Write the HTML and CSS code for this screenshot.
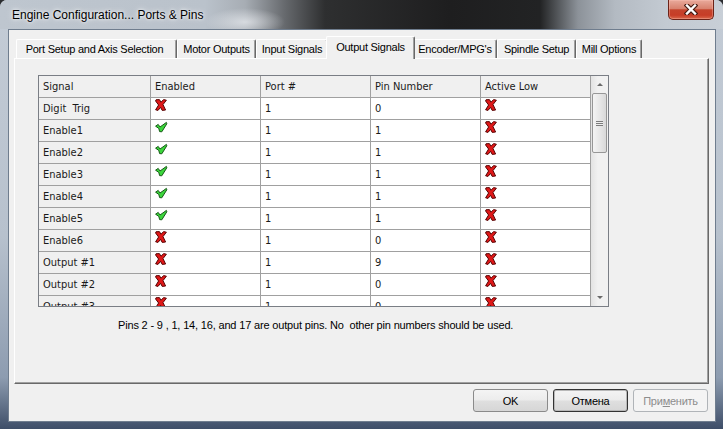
FILE: index.html
```html
<!DOCTYPE html>
<html lang="en">

<head>
  <meta charset="UTF-8" />
  <title>Engine Configuration... Ports &amp; Pins</title>
  <link rel="stylesheet" href="styles.css">
</head>

<body>
  <div class="window">
    <div class="titlebar">
      <span class="title">Engine Configuration... Ports &amp; Pins</span>
      <div class="close">
        <svg width="14" height="11" viewBox="0 0 14 11">
          <path d="M3 1.5 L11 9.5 M11 1.5 L3 9.5" stroke="#4a1d14" stroke-width="4.6" stroke-linecap="square" fill="none" />
          <path d="M3 1.5 L11 9.5 M11 1.5 L3 9.5" stroke="#fff" stroke-width="2.4" stroke-linecap="square" fill="none" />
        </svg>
      </div>
    </div>

    <div class="frame">
      <div class="client">
        <div class="tabs">
          <div class="tab tab-port">Port Setup and Axis Selection</div>
          <div class="tab tab-motor">Motor Outputs</div>
          <div class="tab tab-input">Input Signals</div>
          <div class="tab tab-output active">Output Signals</div>
          <div class="tab tab-encoder">Encoder/MPG's</div>
          <div class="tab tab-spindle">Spindle Setup</div>
          <div class="tab tab-mill">Mill Options</div>
        </div>

        <div class="panel">
          <div class="grid">
            <div class="grid-body">
              <table>
                <thead>
                  <tr>
                    <th class="col-signal">Signal</th>
                    <th class="col">Enabled</th>
                    <th class="col">Port #</th>
                    <th class="col">Pin Number</th>
                    <th class="col">Active Low</th>
                  </tr>
                </thead>
                <tbody id="rows"></tbody>
              </table>
            </div>
            <div class="scrollbar">
              <div class="sb-btn"><span class="arrow-up"></span></div>
              <div class="sb-thumb"><span class="grip"></span></div>
              <div class="sb-track"></div>
              <div class="sb-btn"><span class="arrow-down"></span></div>
            </div>
          </div>
          <p class="note">Pins 2 - 9 , 1, 14, 16, and 17 are output pins. No  other pin numbers should be used.</p>
        </div>

        <div class="buttons">
          <button class="btn">OK</button>
          <button class="btn btn-default">Отмена</button>
          <button class="btn" disabled>При<u>м</u>енить</button>
        </div>
      </div>
    </div>
  </div>

  <script>
    const signals = [
      ["Digit  Trig", false, 1, 0, false],
      ["Enable1", true, 1, 1, false],
      ["Enable2", true, 1, 1, false],
      ["Enable3", true, 1, 1, false],
      ["Enable4", true, 1, 1, false],
      ["Enable5", true, 1, 1, false],
      ["Enable6", false, 1, 0, false],
      ["Output #1", false, 1, 9, false],
      ["Output #2", false, 1, 0, false],
      ["Output #3", false, 1, 0, false]
    ];

    const cross = `<svg class="icon" width="12" height="12" viewBox="0 0 12 12">
      <polygon points="1,0.8 4.4,0.6 6,3.2 8.6,0.6 11.4,1.2 8,5.6 10.6,11 7.2,11.4 5.6,8.4 3,11.4 0.6,10.8 3.6,6 0.6,2"
        fill="#e01818" stroke="#560404" stroke-width="1" stroke-linejoin="round" /></svg>`;
    const check = `<svg class="icon" width="13" height="12" viewBox="0 0 13 12">
      <polygon points="0.6,5.2 3.2,3.4 5,6 11.4,1.4 11.8,2.8 6.8,10.8 4.6,10.6 3.8,7.4"
        fill="#3cd63c" stroke="#155815" stroke-width="1" stroke-linejoin="round" /></svg>`;

    const body = document.getElementById("rows");
    signals.forEach(([name, enabled, port, pin, low]) => {
      const tr = document.createElement("tr");
      tr.innerHTML = `
        <td class="row-head">${name}</td>
        <td class="cell-icon">${enabled ? check : cross}</td>
        <td>${port}</td>
        <td>${pin}</td>
        <td class="cell-icon">${low ? check : cross}</td>
      `;
      body.appendChild(tr);
    });
  </script>
</body>

</html>
```

FILE: styles.css
```css
html,
body {
  margin: 0;
  padding: 0;
  background: #2b2d30;
}

.window {
  width: 723px;
  height: 429px;
  overflow: hidden;
  border-radius: 7px 7px 0 0;
  background: linear-gradient(to bottom, #c4ccd6 0, #b7c1cd 55%, #8d9cb0 88%, #3e4e68 100%);
}

.titlebar {
  height: 29px;
  display: flex;
  justify-content: space-between;
  align-items: flex-start;
  background:
    radial-gradient(ellipse 40px 14px at 245px 22px, rgba(235, 238, 242, 0.7), rgba(235, 238, 242, 0)),
    linear-gradient(to right, #bec6cf 0, #bac2cb 205px, #a7adb4 245px, #66696d 285px, #2e2f30 325px, #1e1e1f 450px, #222324 540px, #8c9299 578px, #b3bac2 615px, #c3cad2 665px, #c8cfd7 723px);
}

.title {
  margin: 8px 0 0 12px;
  font-family: "Liberation Sans", Arial, sans-serif;
  font-size: 12px;
  color: #000;
  text-shadow: 0 0 6px rgba(255, 255, 255, 0.9), 0 0 3px rgba(255, 255, 255, 0.9);
}

.close {
  width: 44px;
  height: 19px;
  margin-right: 9px;
  display: flex;
  align-items: center;
  justify-content: center;
  border: 1px solid #6b2318;
  border-top: none;
  border-radius: 0 0 5px 5px;
  background: linear-gradient(to bottom, #e9aa9c 0%, #d8826f 45%, #c4432c 52%, #c73d27 80%, #d9684b 100%);
  box-shadow: inset 0 0 0 1px rgba(255, 200, 190, 0.35);
}

.frame {
  padding: 0 7px 7px 8px;
}

.client {
  box-sizing: border-box;
  height: 393px;
  border: 1px solid #6f7d8e;
  background: #f0f0f0;
  font-family: "Liberation Sans", Arial, sans-serif;
  font-size: 11px;
  letter-spacing: -0.25px;
  color: #000;
}

/* tab strip */

.tabs {
  display: flex;
  align-items: flex-end;
  height: 22px;
  margin: 6px 0 0 7px;
}

.tab {
  box-sizing: border-box;
  height: 19px;
  line-height: 18px;
  padding: 0;
  border-top: 1px solid #fff;
  border-left: 1px solid #fff;
  border-right: 1px solid #696969;
  border-radius: 2px 2px 0 0;
  box-shadow: inset -1px 0 0 #a0a0a0;
  text-align: center;
  white-space: nowrap;
}

.tab-port {
  width: 161px;
  padding-right: 4px;
}

.tab-motor {
  width: 79px;
}

.tab-input {
  width: 72px;
}

.tab-output {
  width: 85px;
}

.tab-encoder {
  width: 84px;
}

.tab-spindle {
  width: 79px;
}

.tab-mill {
  width: 66px;
}

.tab.active {
  position: relative;
  z-index: 1;
  width: 89px;
  height: 23px;
  line-height: 21px;
  margin: 0 -2px -1px;
  background: #f0f0f0;
}

.panel {
  box-sizing: border-box;
  width: 695px;
  height: 326px;
  margin-left: 5px;
  border: 1px solid;
  border-color: #fff #696969 #696969 #fff;
  box-shadow: inset -1px -1px 0 #a0a0a0;
  overflow: hidden;
}

/* data grid */

.grid {
  display: flex;
  width: 571px;
  height: 232px;
  box-sizing: border-box;
  margin: 16px 0 0 23px;
  border: 1px solid #7a7e85;
  background: #fff;
  overflow: hidden;
}

.grid-body {
  width: 552px;
  overflow: hidden;
}

table {
  border-collapse: separate;
  border-spacing: 0;
  table-layout: fixed;
  width: 552px;
  font-family: "DejaVu Sans Condensed", "DejaVu Sans", sans-serif;
  font-stretch: condensed;
  font-size: 11px;
  letter-spacing: 0;
  color: #1a1a1a;
}

th,
td {
  box-sizing: border-box;
  height: 22px;
  padding: 0 0 0 4px;
  border-right: 1px solid #a0a0a0;
  border-bottom: 1px solid #a0a0a0;
  text-align: left;
  font-weight: normal;
  vertical-align: middle;
  white-space: pre;
}

th {
  background: #f0f0f0;
}

.col-signal {
  width: 112px;
}

.col {
  width: 110px;
}

.row-head {
  background: #f0f0f0;
}

.cell-icon {
  vertical-align: top;
  padding-top: 1px;
}

.icon {
  display: block;
}

/* scrollbar */

.scrollbar {
  display: flex;
  flex-direction: column;
  width: 17px;
  background: linear-gradient(to right, #e3e3e3, #f1f1f1 40%, #f1f1f1);
}

.sb-btn {
  height: 17px;
  display: flex;
  align-items: center;
  justify-content: center;
}

.arrow-up {
  width: 0;
  height: 0;
  border-left: 3px solid transparent;
  border-right: 3px solid transparent;
  border-bottom: 3px solid #6a6a6a;
}

.arrow-down {
  width: 0;
  height: 0;
  border-left: 3px solid transparent;
  border-right: 3px solid transparent;
  border-top: 3px solid #6a6a6a;
}

.sb-thumb {
  box-sizing: border-box;
  height: 60px;
  margin: 0 1px 0 1px;
  border: 1px solid #979797;
  border-radius: 2px;
  background: linear-gradient(to right, #f4f4f4, #e6e6e6 55%, #d9d9d9);
  display: flex;
  align-items: center;
  justify-content: center;
}

.grip {
  width: 7px;
  height: 5px;
  background: repeating-linear-gradient(to bottom, #7c7c7c 0, #7c7c7c 1px, #eee 1px, #eee 2px);
}

.sb-track {
  flex: 1;
}

.note {
  margin: 11px 0 0 103px;
  line-height: 14px;
  letter-spacing: -0.17px;
  white-space: pre;
}

/* dialog buttons */

.buttons {
  display: flex;
  justify-content: flex-end;
  gap: 5px;
  margin: 5px 7px 0 0;
}

.btn {
  box-sizing: border-box;
  width: 75px;
  height: 23px;
  padding: 0;
  border: 1px solid #8a8a8a;
  border-radius: 3px;
  background: linear-gradient(to bottom, #f4f4f4 0%, #ececec 48%, #dfdfdf 52%, #d6d6d6 100%);
  font-family: "Liberation Sans", Arial, sans-serif;
  font-size: 11px;
  letter-spacing: -0.25px;
  color: #000;
}

.btn-default {
  border-color: #333;
  box-shadow: inset 0 0 0 1px #b8b8b8;
}

.btn:disabled {
  border-color: #b0b4b8;
  background: #f4f4f4;
  color: #8d8d8d;
}
```
